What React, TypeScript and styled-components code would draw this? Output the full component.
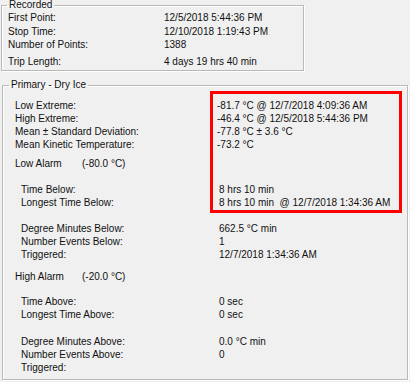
import React from "react";
import styled, { createGlobalStyle } from "styled-components";

const Global = createGlobalStyle`
  html, body {
    margin: 0;
    padding: 0;
    background: #f0f0f0;
  }
  body {
    font-family: "Liberation Sans", Arial, sans-serif;
    font-size: 10px;
    color: #111;
    width: 410px;
    height: 382px;
    overflow: hidden;
  }
`;

const Page = styled.div`
  display: flex;
  flex-direction: column;
  align-items: flex-start;
`;

const Group = styled.fieldset<{ $left: number; $top: number; $width: number; $pt: number; $pb: number }>`
  box-sizing: border-box;
  margin: ${(p) => p.$top}px 0 0 ${(p) => p.$left}px;
  width: ${(p) => p.$width}px;
  min-width: 0;
  padding: ${(p) => p.$pt}px 0 ${(p) => p.$pb}px 0;
  border: 1px solid #b9b9b9;
  box-shadow: 1px 1px 0 #ffffff, inset 1px 1px 0 #ffffff;
`;

const Title = styled.legend<{ $ml: number }>`
  margin-left: ${(p) => p.$ml}px;
  padding: 0 2px;
  line-height: 10px;
  height: 10px;
  font-size: 10px;
  white-space: nowrap;
`;

const Body = styled.div<{ $pl: number }>`
  position: relative;
  display: flex;
  flex-direction: column;
  padding-left: ${(p) => p.$pl}px;
`;

const Row = styled.div<{ $mt?: number; $h?: number }>`
  display: flex;
  align-items: center;
  height: ${(p) => p.$h ?? 13}px;
  line-height: ${(p) => p.$h ?? 13}px;
  margin-top: ${(p) => p.$mt ?? 0}px;
  white-space: pre;
`;

const Label = styled.span<{ $w: number; $indent?: number }>`
  flex: none;
  width: ${(p) => p.$w}px;
  margin-left: ${(p) => p.$indent ?? 0}px;
`;

const Value = styled.span`
  flex: none;
`;

const Highlight = styled.div`
  position: absolute;
  left: 207px;
  top: -7.5px;
  width: 192px;
  height: 122px;
  box-sizing: border-box;
  border: 3px solid #ff0000;
  pointer-events: none;
`;

type Item = { label: string; value: string; mt?: number; indent?: boolean; alarm?: boolean };

const recorded: Item[] = [
  { label: "First Point:", value: "12/5/2018 5:44:36 PM" },
  { label: "Stop Time:", value: "12/10/2018 1:19:43 PM" },
  { label: "Number of Points:", value: "1388" },
  { label: "Trip Length:", value: "4 days 19 hrs 40 min", mt: 3.5 },
];

const primary: Item[] = [
  { label: "Low Extreme:", value: "-81.7 °C @ 12/7/2018 4:09:36 AM" },
  { label: "High Extreme:", value: "-46.4 °C @ 12/5/2018 5:44:36 PM" },
  { label: "Mean ± Standard Deviation:", value: "-77.8 °C ± 3.6 °C" },
  { label: "Mean Kinetic Temperature:", value: "-73.2 °C" },
  { label: "Low Alarm", value: "(-80.0 °C)", mt: 6.5, alarm: true },
  { label: "Time Below:", value: "8 hrs 10 min", mt: 12.5, indent: true },
  { label: "Longest Time Below:", value: "8 hrs 10 min  @ 12/7/2018 1:34:36 AM", indent: true },
  { label: "Degree Minutes Below:", value: "662.5 °C min", mt: 13.5, indent: true },
  { label: "Number Events Below:", value: "1", indent: true },
  { label: "Triggered:", value: "12/7/2018 1:34:36 AM", indent: true },
  { label: "High Alarm", value: "(-20.0 °C)", mt: 9, alarm: true },
  { label: "Time Above:", value: "0 sec", mt: 12, indent: true },
  { label: "Longest Time Above:", value: "0 sec", indent: true },
  { label: "Degree Minutes Above:", value: "0.0 °C min", mt: 14, indent: true },
  { label: "Number Events Above:", value: "0", indent: true },
  { label: "Triggered:", value: "", indent: true },
];

export default function App() {
  return (
    <Page>
      <Global />
      <Group $left={1} $top={0} $width={303} $pt={1} $pb={1.5}>
        <Title $ml={5}>Recorded</Title>
        <Body $pl={6}>
          {recorded.map((r, i) => (
            <Row key={i} $mt={r.mt} $h={13.5}>
              <Label $w={156}>{r.label}</Label>
              <Value>{r.value}</Value>
            </Row>
          ))}
        </Body>
      </Group>
      <Group $left={2} $top={9} $width={406} $pt={8.5} $pb={5}>
        <Title $ml={6}>Primary - Dry Ice</Title>
        <Body $pl={12}>
          {primary.map((r, i) => (
            <Row key={i} $mt={r.mt}>
              {r.alarm ? (
                <Label $w={67}>{r.label}</Label>
              ) : r.indent ? (
                <Label $w={198} $indent={6}>{r.label}</Label>
              ) : (
                <Label $w={202}>{r.label}</Label>
              )}
              <Value>{r.value}</Value>
            </Row>
          ))}
          <Highlight />
        </Body>
      </Group>
    </Page>
  );
}
